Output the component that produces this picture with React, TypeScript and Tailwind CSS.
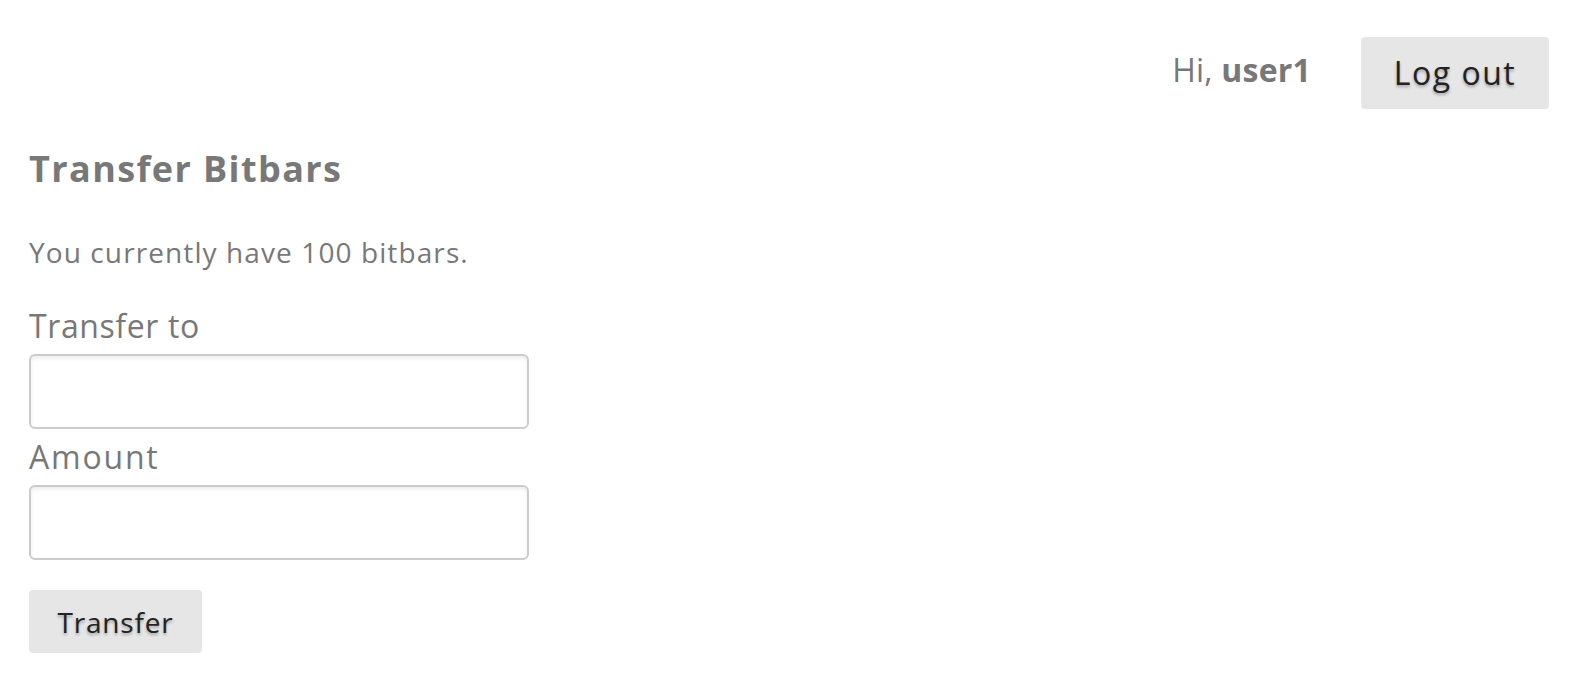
const font = { fontFamily: '"Open Sans", "DejaVu Sans", sans-serif' };

function Field({ label, wide }: { label: string; wide?: boolean }) {
  return (
    <div>
      <label
        className={
          "block h-[40px] text-[32px] leading-[40px] text-[#787878] " +
          (wide ? "tracking-[1.8px]" : "tracking-[0.6px]")
        }
      >
        {label}
      </label>
      <input
        type="text"
        className="mt-[8px] block h-[75px] w-[500px] rounded-[6px] border-2 border-[#cccccc] bg-white px-3 text-[28px] shadow-[inset_0_2px_4px_rgba(0,0,0,0.08)] outline-none"
      />
    </div>
  );
}

export default function App() {
  return (
    <div className="min-h-screen bg-white px-[29px] pt-[37px]" style={font}>
      {/* header */}
      <div className="flex items-start justify-end gap-[50px]">
        <p className="mt-[13px] h-[40px] text-[32px] leading-[40px] tracking-[0.2px] text-[#787878]">
          Hi, <span className="font-bold">user1</span>
        </p>
        <button className="h-[72px] w-[188px] rounded-[4px] bg-[#e6e6e6] text-[32px] tracking-[1.5px] text-[#222] [text-shadow:0_2px_3px_rgba(0,0,0,0.3)]">
          Log out
        </button>
      </div>

      <h2 className="mt-[36px] h-[48px] text-[36px] font-bold leading-[48px] tracking-[1.4px] text-[#787878]">Transfer Bitbars</h2>

      <p className="mt-[39px] h-[40px] text-[28px] leading-[40px] tracking-[1.1px] text-[#787878]">You currently have 100 bitbars.</p>

      <div className="mt-[34px] flex flex-col gap-[8px]">
        <Field label="Transfer to" />
        <Field label="Amount" wide />
      </div>

      <button className="mt-[30px] h-[63px] w-[173px] rounded-[4px] bg-[#e6e6e6] text-[28px] tracking-[0.8px] text-[#222] [text-shadow:0_2px_3px_rgba(0,0,0,0.3)]">
        Transfer
      </button>
    </div>
  );
}
